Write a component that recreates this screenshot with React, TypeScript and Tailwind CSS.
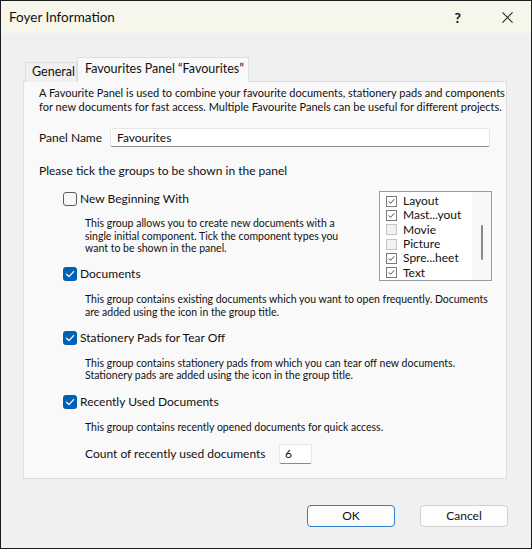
import React from "react";

const Check = ({ className = "" }: { className?: string }) => (
  <svg viewBox="0 0 14 14" className={className}>
    <path d="M3.5 7.2 L6 9.6 L10.6 4.6" fill="none" stroke="white" strokeWidth="1.3" strokeLinecap="round" strokeLinejoin="round" />
  </svg>
);

const Box = ({ checked }: { checked: boolean }) =>
  checked ? (
    <div className="w-[14px] h-[14px] rounded-[3px] bg-[#005fb8] flex items-center justify-center shrink-0">
      <Check className="w-[14px] h-[14px]" />
    </div>
  ) : (
    <div className="w-[14px] h-[14px] rounded-[3px] border border-[#5d5d5d] bg-[#f7f7f7] shrink-0" />
  );

const SmallBox = ({ checked }: { checked: boolean }) => (
  <div
    className={
      "w-[11px] h-[11px] border shrink-0 flex items-center justify-center " +
      (checked ? "border-[#7a7a7a] bg-white" : "border-[#c4c4c4] bg-[#f2f2f2]")
    }
  >
    {checked && (
      <svg viewBox="0 0 11 11" className="w-[11px] h-[11px]">
        <path d="M2 5.4 L4.3 7.8 L8.8 2.8" fill="none" stroke="#333" strokeWidth="1.1" />
      </svg>
    )}
  </div>
);

const GroupRow = ({ checked, label }: { checked: boolean; label: string }) => (
  <div className="flex items-center h-[14px] gap-[3px]">
    <Box checked={checked} />
    <span className="text-[12px] leading-[14px] whitespace-nowrap">{label}</span>
  </div>
);

const listItems: [string, boolean][] = [
  ["Layout", true],
  ["Mast...yout", true],
  ["Movie", false],
  ["Picture", false],
  ["Spre...heet", true],
  ["Text", true],
];

export default function App() {
  return (
    <div className="w-[532px] h-[549px] border border-[#1c1c1c] bg-[#f0f0f0] flex flex-col overflow-hidden text-[#111] font-['Lato',sans-serif]">
      {/* title bar */}
      <div className="h-[32px] shrink-0 bg-[#f6f6ea] flex items-center pl-[8px] pr-[18px]">
        <span className="text-[13.5px]">Foyer Information</span>
        <span className="ml-auto text-[14px] font-bold mr-[41px]">?</span>
        <svg viewBox="0 0 12 12" className="w-[11px] h-[11px]">
          <path d="M0.5 0.5 L11.5 11.5 M11.5 0.5 L0.5 11.5" stroke="#222" strokeWidth="1.1" />
        </svg>
      </div>

      <div className="flex flex-col pl-[22px] pt-[24px]">
        {/* tabs */}
        <div className="flex items-end pl-[2px] h-[25px] relative z-10 -mb-[1px]">
          <div className="h-[20px] w-[52px] border border-b-0 border-[#dedede] bg-[#f0f0f0] flex items-center pl-[6px] text-[12.5px]">
            General
          </div>
          <div className="h-[25px] w-[172px] border border-b-0 border-[#dedede] bg-[#f9f9f9] flex items-center pl-[7px] pb-[2px] text-[12.5px] whitespace-nowrap">
            Favourites Panel “Favourites”
          </div>
        </div>

        {/* panel */}
        <div className="w-[484px] h-[398px] border border-[#dedede] bg-[#f9f9f9] flex flex-col pl-[15px] pt-[4px]">
          <p className="text-[11px] leading-[13.5px] whitespace-nowrap">
            A Favourite Panel is used to combine your favourite documents, stationery pads and components
            <br />
            for new documents for fast access. Multiple Favourite Panels can be useful for different projects.
          </p>

          <div className="flex items-center mt-[15px] h-[19px]">
            <span className="text-[12px] w-[71px]">Panel Name</span>
            <div className="w-[380px] h-[19px] bg-white border border-[#e6e6e6] border-b-[#8a8a8a] rounded-[2px] flex items-center pl-[6px] text-[12px]">
              Favourites
            </div>
          </div>

          <div className="text-[12px] mt-[16px] leading-[16px]">Please tick the groups to be shown in the panel</div>

          {/* groups */}
          <div className="flex flex-col pl-[24px] mt-[12px]">
            <div className="flex">
              <div className="flex flex-col flex-1 pt-[1px]">
                <GroupRow checked={false} label="New Beginning With" />
                <p className="text-[10.5px] leading-[12.7px] pl-[22px] mt-[11px] whitespace-nowrap">
                  This group allows you to create new documents with a
                  <br />
                  single initial component. Tick the component types you
                  <br />
                  want to be shown in the panel.
                </p>
                <div className="mt-[12px]">
                  <GroupRow checked={true} label="Documents" />
                </div>
              </div>
              <div className="w-[113px] h-[90px] border border-[#9c9c9c] bg-white flex mr-[14px]">
                <div className="flex-1 flex flex-col pl-[6px] pt-[2px]">
                  {listItems.map(([t, c]) => (
                    <div key={t} className="flex items-center h-[14.5px] gap-[6px]">
                      <SmallBox checked={c} />
                      <span className="text-[12px] leading-[14px]">{t}</span>
                    </div>
                  ))}
                </div>
                <div className="w-[19px] bg-[#f8f8f8] flex justify-center pt-[33px]">
                  <div className="w-[2px] h-[35px] bg-[#8a8a8a] rounded-full" />
                </div>
              </div>
            </div>

            <p className="text-[10.5px] leading-[12.7px] pl-[22px] mt-[12px] whitespace-nowrap">
              This group contains existing documents which you want to open frequently. Documents
              <br />
              are added using the icon in the group title.
            </p>

            <div className="mt-[12px]">
              <GroupRow checked={true} label="Stationery Pads for Tear Off" />
            </div>
            <p className="text-[10.5px] leading-[12.7px] pl-[22px] mt-[12px] whitespace-nowrap">
              This group contains stationery pads from which you can tear off new documents.
              <br />
              Stationery pads are added using the icon in the group title.
            </p>

            <div className="mt-[13px]">
              <GroupRow checked={true} label="Recently Used Documents" />
            </div>
            <p className="text-[10.5px] leading-[12.7px] pl-[22px] mt-[12px] whitespace-nowrap">
              This group contains recently opened documents for quick access.
            </p>

            <div className="flex items-center pl-[22px] mt-[10px] h-[20px]">
              <span className="text-[12px] w-[194px] whitespace-nowrap">Count of recently used documents</span>
              <div className="w-[33px] h-[20px] bg-white border border-[#e6e6e6] border-b-[#8a8a8a] rounded-[2px] flex items-center pl-[5px] text-[12px]">
                6
              </div>
            </div>
          </div>
        </div>

        {/* buttons */}
        <div className="flex justify-end gap-[25px] mt-[26px] pr-[23px]">
          <button className="w-[88px] h-[22px] rounded-[4px] border border-[#2f7fd0] bg-[#fdfdfd] text-[12px] flex items-center justify-center">
            OK
          </button>
          <button className="w-[88px] h-[22px] rounded-[4px] border border-[#d0d0d0] bg-[#fdfdfd] text-[12px] flex items-center justify-center">
            Cancel
          </button>
        </div>
      </div>
    </div>
  );
}
